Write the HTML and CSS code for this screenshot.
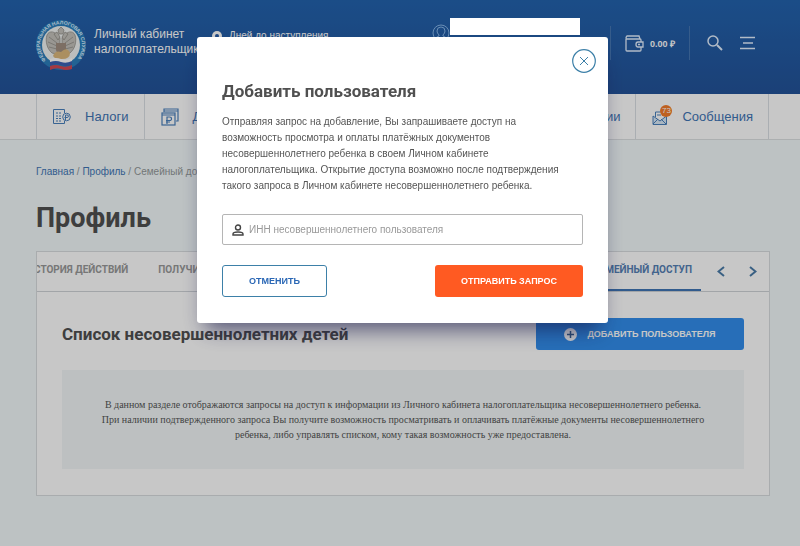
FILE: index.html
```html
<!DOCTYPE html>
<html lang="ru">
<head>
<meta charset="UTF-8">
<meta name="viewport" content="width=device-width, initial-scale=1.0">
<title>Личный кабинет налогоплательщика</title>
<link rel="stylesheet" href="styles.css">
</head>
<body>

<header class="header">
    <a class="logo" href="#">
        <svg width="50" height="54" viewBox="0 0 50 54" aria-hidden="true">
            <defs>
                <path id="ring" d="M10 42A21 21 0 1 1 40 42"/>
            </defs>
            <circle cx="25" cy="27" r="25" fill="#2c7fbd"/>
            <text class="logo-ring"><textPath href="#ring">ФЕДЕРАЛЬНАЯ НАЛОГОВАЯ СЛУЖБА</textPath></text>
            <circle cx="25" cy="27" r="19" fill="#f1f4f2"/>
            <g fill="#c4c2bb" stroke="#8d8a84" stroke-width=".7">
                <path d="M24 20C20 13 13 12 11 17c-2 6 0 14 5 18l8 2z"/>
                <path d="M26 20c4-7 11-8 13-3 2 6 0 14-5 18l-8 2z"/>
                <path d="M22 12l3-3 3 3-1 4h-4zM18 16l3-2 3 5-2 3zM32 16l-3-2-3 5 2 3z"/>
                <path d="M13 19l8 6M12 24l9 4M13 29l8 2M37 19l-8 6M38 24l-9 4M37 29l-8 2" fill="none"/>
            </g>
            <path d="M20 25h10v7q-1 4-5 5-4-1-5-5z" fill="#a08f80"/>
            <path d="M17 38q2-6 8-4 6-6 9 1 0 6-8 6-6 1-9-3z" fill="#dcb87c"/>
            <path d="M14 41q6-2 11 0t11-1v4q-6 2-11 0t-11 1z" fill="#fff"/>
            <path d="M14 44q6-2 11 0t11-1v4q-6 2-11 0t-11 1z" fill="#3b62b4"/>
            <path d="M14 48q6-2 11 0t11-1v4q-6 2-11 0t-11 1z" fill="#d34a55"/>
        </svg>
        <span>Личный кабинет<br>налогоплательщика</span>
    </a>
    <div class="deadline">
        <svg width="10" height="10" viewBox="0 0 10 10" aria-hidden="true">
            <circle cx="5" cy="5" r="5" fill="#fff"/>
            <circle cx="5" cy="5" r="2" fill="#235aa7"/>
        </svg>
        <span>Дней до наступления</span>
    </div>
    <div class="user">
        <svg width="18" height="18" viewBox="0 0 18 18" fill="none" stroke="#86b5e8" aria-hidden="true">
            <circle cx="9" cy="9" r="8"/>
            <path d="M3 15q1-2 4-3v-1q-2-2-2-4 0-4 4-4t4 4q0 2-2 4v1q3 1 4 3"/>
        </svg>
        <span class="user-name"></span>
    </div>
    <div class="header-tools">
        <a class="wallet" href="#">
            <svg width="19" height="17" viewBox="0 0 19 17" fill="none" stroke="#e4f0ff" stroke-width="1.300" aria-hidden="true">
                <path d="M1 4v11q0 1 1 1h13q1 0 1-1v-3M16 7V5q0-1-1-1H2Q1 4 1 3t1-2h12l1 3"/>
                <path d="M18 7h-5q-2 0-2 2.500T13 12h5z"/>
                <path d="M13 9.500h2"/>
            </svg>
            <span>0.00 ₽</span>
        </a>
        <button class="icon-btn" type="button" aria-label="Поиск">
            <svg width="16" height="16" viewBox="0 0 16 16" fill="none" stroke="#e4f0ff" aria-hidden="true">
                <circle cx="6" cy="6" r="5" stroke-width="1.500"/>
                <path d="M10 10l5 5" stroke-width="2"/>
            </svg>
        </button>
        <button class="icon-btn" type="button" aria-label="Меню">
            <svg width="16" height="14" viewBox="0 0 16 14" fill="none" stroke="#e4f0ff" stroke-width="1.300" aria-hidden="true">
                <path d="M0 1.500h15M3 7h10M0 12.500h15"/>
            </svg>
        </button>
    </div>
</header>

<nav class="nav">
    <a href="#">
        <svg width="18" height="16" viewBox="0 0 18 16" fill="none" stroke="#4a80bd" aria-hidden="true">
            <path d="M11.500 4V.500H.500v14h11V12"/>
            <path d="M3 4h6M3 7h5M3 9.500h5M3 12h6" stroke-dasharray="2 1"/>
            <circle cx="13.500" cy="8" r="3.800"/>
            <path d="M12.500 11V6h1.500q1.500 0 1.500 1.200T14 8.500h-2.500"/>
        </svg>
        <span>Налоги</span>
    </a>
    <a href="#">
        <svg width="18" height="18" viewBox="0 0 18 18" fill="none" stroke="#4a80bd" stroke-width="1.200" aria-hidden="true">
            <path d="M3 4V1h14v12h-2M3 3h14"/>
            <rect x="1" y="5" width="13" height="12"/>
            <path d="M1 7h13M6 16V9h2.500q2 0 2 1.800t-2 1.700H5M5 14h4"/>
        </svg>
        <span>Доходы</span>
    </a>
    <a class="nav-wide" href="#"><span>Жизненные ситуации</span></a>
    <a class="nav-messages" href="#">
        <span class="mail">
            <svg width="16" height="16" viewBox="0 0 16 16" fill="none" stroke="#4a80bd" aria-hidden="true">
                <path d="M1 7v8.500h13.500V7L8 12z" fill="#d9e9f8"/>
                <path d="M1 15l5-5M14 15l-5-5M3.500 8V3h5M5 6h4"/>
            </svg>
            <span class="badge">73</span>
        </span>
        <span>Сообщения</span>
    </a>
</nav>

<main class="content">
    <div class="breadcrumbs">
        <a href="#">Главная</a> / <a href="#">Профиль</a> / <span>Семейный доступ</span>
    </div>
    <h1>Профиль</h1>

    <section class="panel">
        <div class="tabs">
            <div class="tab-list">
                <a href="#">История действий</a>
                <a href="#">Получить ЭП</a>
                <a class="active" href="#">Семейный доступ</a>
            </div>
            <button class="arrow" type="button" aria-label="Назад">
                <svg width="8" height="11" viewBox="0 0 8 11" aria-hidden="true"><path d="M7 1L1.500 5.500 7 10"/></svg>
            </button>
            <button class="arrow" type="button" aria-label="Вперёд">
                <svg width="8" height="11" viewBox="0 0 8 11" aria-hidden="true"><path d="M1 1l5.500 4.500L1 10"/></svg>
            </button>
        </div>
        <div class="panel-body">
            <div class="panel-head">
                <h2>Список несовершеннолетних детей</h2>
                <button class="btn btn-add" type="button">
                    <svg width="13" height="13" viewBox="0 0 13 13" aria-hidden="true">
                        <circle cx="6.500" cy="6.500" r="6.500" fill="#fff"/>
                        <path d="M6.500 3v7M3 6.500h7" stroke="#3b6290" stroke-width="1.500"/>
                    </svg>
                    <span>Добавить пользователя</span>
                </button>
            </div>
            <p class="note">В данном разделе отображаются запросы на доступ к информации из Личного кабинета налогоплательщика несовершеннолетнего ребенка. При наличии подтвержденного запроса Вы получите возможность просматривать и оплачивать платёжные документы несовершеннолетнего ребенка, либо управлять списком, кому такая возможность уже предоставлена.</p>
        </div>
    </section>
</main>

<div class="overlay">
    <form class="modal" role="dialog" aria-labelledby="modalTitle">
        <button class="close" type="button" aria-label="Закрыть">
            <svg width="24" height="24" viewBox="0 0 24 24" fill="none" stroke="#3d80a8" aria-hidden="true">
                <circle cx="12" cy="12" r="11.300" stroke-width="1.200"/>
                <path d="M8 8l8 8M16 8l-8 8"/>
            </svg>
        </button>
        <h2 id="modalTitle">Добавить пользователя</h2>
        <p>Отправляя запрос на добавление, Вы запрашиваете доступ на возможность просмотра и оплаты платёжных документов несовершеннолетнего ребенка в своем Личном кабинете налогоплательщика. Открытие доступа возможно после подтверждения такого запроса в Личном кабинете несовершеннолетнего ребенка.</p>
        <label class="field">
            <svg width="12" height="12" viewBox="0 0 12 12" fill="none" stroke="#444" stroke-width="1.400" aria-hidden="true">
                <circle cx="6" cy="3.500" r="2.500"/>
                <path d="M1 11v-1q0-2 5-2t5 2v1z"/>
            </svg>
            <input type="text" name="inn" aria-label="ИНН" placeholder="ИНН несовершеннолетнего пользователя">
        </label>
        <div class="actions">
            <button class="btn btn-cancel" type="button">Отменить</button>
            <button class="btn btn-send" type="submit">Отправить запрос</button>
        </div>
    </form>
</div>

</body>
</html>
```
FILE: styles.css
```css
* {
    box-sizing: border-box;
}

body {
    margin: 0;
    min-height: 100vh;
    background: #f2f9fa;
    color: #555;
    font-family: "Liberation Sans", Arial, sans-serif;
    font-size: 10px;
}

a {
    color: #3f75b5;
    text-decoration: none;
}

h1,
h2 {
    margin: 0;
    color: #505050;
    font-family: Roboto, sans-serif;
    font-weight: bold;
}

button {
    padding: 0;
    border: none;
    background: none;
    font-family: inherit;
    cursor: pointer;
}

svg {
    display: block;
    flex-shrink: 0;
}

/* header */
.header {
    display: flex;
    align-items: flex-start;
    height: 94px;
    padding: 18px 44px 0 36px;
    background: linear-gradient(#2363ae, #235399);
    color: #fff;
}

.logo {
    display: flex;
    gap: 8px;
    width: 176px;
    color: #fff;
    font-size: 12px;
    line-height: 15px;
}

.logo span {
    padding-top: 9px;
}

.logo-ring {
    fill: #dcefff;
    font-size: 5px;
    font-weight: bold;
}

.deadline {
    display: flex;
    align-items: center;
    gap: 7px;
    width: 220px;
    padding-top: 12px;
}

.user {
    display: flex;
    align-items: flex-start;
}

.user svg {
    margin-top: 6px;
}

.user-name {
    position: relative;
    z-index: 20;
    width: 130px;
    height: 17px;
    background: #fff;
}

.header-tools {
    display: flex;
    align-items: center;
    gap: 17px;
    height: 34px;
    margin: 8px 0 0 auto;
}

.wallet {
    display: flex;
    align-items: center;
    gap: 6px;
    height: 34px;
    padding: 0 14px;
    border: solid #4677b3;
    border-width: 0 1px;
    color: #fff;
    font-size: 9px;
    font-weight: bold;
}

/* main menu */
.nav {
    display: flex;
    height: 46px;
    padding: 0 31px 0 36px;
    background: #fff;
    border-bottom: 1px solid #dde0e2;
}

.nav a {
    display: flex;
    align-items: center;
    gap: 14px;
    padding: 0 15px 0 16px;
    border-left: 1px solid #dadfe4;
    font-size: 13px;
}

.nav .nav-wide {
    flex: 1;
    justify-content: flex-end;
}

.nav .nav-messages {
    border-right: 1px solid #dadfe4;
}

.mail {
    position: relative;
}

.badge {
    position: absolute;
    top: -4px;
    right: -4px;
    width: 12px;
    height: 12px;
    border-radius: 50%;
    background: #f47b2a;
    color: #fff;
    font-size: 8px;
    line-height: 12px;
    text-align: center;
}

/* page */
.content {
    padding: 24px 30px 51px 36px;
}

.breadcrumbs {
    color: #929899;
    line-height: 16px;
}

.content h1 {
    margin: 18px 0 12px;
    font-size: 27px;
    line-height: 41px;
}

.panel {
    background: #fff;
    border: 1px solid #d9dddf;
}

.tabs {
    display: flex;
    height: 40px;
    border-bottom: 1px solid #d0d4d8;
}

.tab-list {
    display: flex;
    flex: 1;
    margin-right: 4px;
    overflow: hidden;
}

.tab-list a {
    padding-right: 30px;
    color: #999;
    font-family: Roboto, sans-serif;
    font-size: 10px;
    font-weight: bold;
    line-height: 36px;
    text-transform: uppercase;
    white-space: nowrap;
}

.tab-list a:first-child {
    margin-left: -10px;
}

.tab-list .active {
    margin-left: auto;
    padding-right: 9px;
    border-bottom: 2px solid #3f75b5;
    color: #5580b5;
}

.arrow {
    width: 32px;
}

.arrow svg {
    margin: 0 auto;
    fill: none;
    stroke: #4a7ba8;
    stroke-width: 2;
}

.panel-body {
    padding: 26px 25px;
}

.panel-head {
    display: flex;
    align-items: center;
    justify-content: space-between;
    margin-bottom: 20px;
}

.panel-head h2 {
    font-size: 17px;
    line-height: 32px;
}

.btn {
    height: 32px;
    border-radius: 3px;
    font-size: 9px;
    font-weight: bold;
    text-transform: uppercase;
}

.btn-add {
    display: flex;
    align-items: center;
    justify-content: center;
    gap: 10px;
    width: 208px;
    background: #328eec;
    color: #fff;
}

.note {
    margin: 0;
    padding: 27px 35px;
    background: #f2f7f8;
    font-family: "Liberation Serif", "Times New Roman", serif;
    line-height: 15px;
    text-align: center;
}

/* modal window */
.overlay {
    position: fixed;
    inset: 0;
    z-index: 10;
    display: flex;
    align-items: flex-start;
    justify-content: center;
    padding: 37px 0 0 5px;
    background: rgba(0, 0, 0, 0.22);
}

.modal {
    position: relative;
    width: 411px;
    padding: 39px 25px 26px;
    border-radius: 3px;
    background: #fff;
    box-shadow: 0 14px 20px -8px rgba(20, 20, 70, 0.65);
}

.close {
    position: absolute;
    top: 12px;
    right: 12px;
}

.modal h2 {
    font-size: 17px;
    line-height: 30px;
}

.modal p {
    margin: 8px 0 20px;
    padding-right: 10px;
    line-height: 16px;
}

.field {
    display: flex;
    align-items: center;
    gap: 5px;
    height: 31px;
    padding: 0 9px;
    border: 1px solid #b5b5b5;
    border-radius: 2px;
}

.field input {
    flex: 1;
    padding: 0;
    border: none;
    outline: none;
    font-family: inherit;
    font-size: 10px;
}

.field input::placeholder {
    color: #999;
}

.actions {
    display: flex;
    justify-content: space-between;
    margin-top: 20px;
}

.btn-cancel {
    width: 105px;
    border: 1px solid #3d80a8;
    color: #2a67b5;
}

.btn-send {
    width: 148px;
    background: #ff5a22;
    color: #fff;
}
```
